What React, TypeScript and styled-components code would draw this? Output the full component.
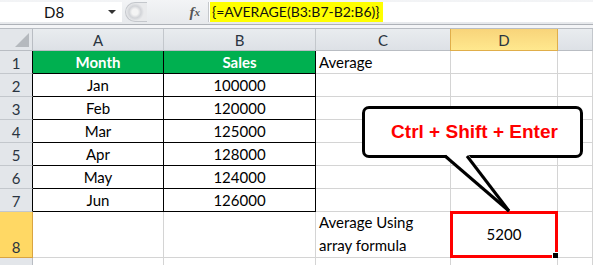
import styled, { createGlobalStyle } from "styled-components";

const Global = createGlobalStyle`
  html, body { margin: 0; padding: 0; background: #fff; }
  body { font-family: Lato, "Liberation Sans", sans-serif; overflow: hidden; }
`;

const Page = styled.div`
  position: relative;
  width: 593px;
  height: 265px;
  overflow: hidden;
  background: #fff;
`;

const FormulaBar = styled.div`
  display: flex;
  height: 25px;
  box-sizing: border-box;
  padding-top: 2px;
  border-bottom: 1px solid #aeb2b8;
  background: linear-gradient(#f3f4f6, #e7e9ec);
`;

const NameBox = styled.div`
  width: 122px;
  height: 20px;
  display: flex;
  align-items: center;
  background: #fff;
  font-size: 15px;
  color: #111;
  position: relative;
  padding-left: 44px;
  box-sizing: border-box;
`;

const Arrow = styled.span`
  position: absolute;
  right: 6px;
  top: 8px;
  border-left: 4px solid transparent;
  border-right: 4px solid transparent;
  border-top: 4px solid #333;
`;

const Grip = styled.div`
  width: 22px;
  height: 20px;
  margin-left: 3px;
  border-radius: 11px 0 0 11px;
  border: 1px solid #c4c7cc;
  border-right: none;
  box-sizing: border-box;
  background: radial-gradient(circle at 9px 9px, #f4f4f4 3px, #d2d4d8 6px, #e9eaec 9px);
`;

const FxBox = styled.div`
  width: 61px;
  display: flex;
  justify-content: flex-end;
  align-items: center;
  padding-right: 8px;
  box-sizing: border-box;
  font-family: "Liberation Serif", serif;
  font-style: italic;
  font-weight: 700;
  font-size: 15px;
  color: #555;
  height: 20px;
  & small { font-size: 11px; }
`;

const FormulaInput = styled.div`
  flex: 1;
  height: 20px;
  background: #fff;
  border-left: 1px solid #c4c7cc;
  display: flex;
  align-items: center;
  padding-left: 1px;
`;

const Highlight = styled.span`
  background: #ffff00;
  font-size: 14px;
  line-height: 20px;
  padding: 0 3px 0 2px;
  color: #111;
`;

const Spacer = styled.div`
  height: 3px;
  background: #f4f5f7;
`;

const Sheet = styled.div`
  display: grid;
  grid-template-columns: 33px 131px 152px 135px 107px 1fr;
  grid-template-rows: 22px repeat(7, 23px) 46px 20px;
  border-top: 1px solid #b9bdc3;
`;

const Corner = styled.div`
  background: #e3e6ea;
  border-right: 1px solid #b9bdc3;
  border-bottom: 1px solid #b9bdc3;
  position: relative;
  &::after {
    content: "";
    position: absolute;
    right: 3px;
    bottom: 3px;
    border-left: 14px solid transparent;
    border-bottom: 14px solid #b5b9be;
  }
`;

const ColHead = styled.div<{ $sel?: boolean }>`
  display: flex;
  align-items: center;
  justify-content: center;
  font-size: 15px;
  color: #2a3440;
  background: ${p => (p.$sel ? "linear-gradient(#f8d47a, #ffe88e)" : "linear-gradient(#e9ecef, #dde1e6)")};
  border-right: 1px solid ${p => (p.$sel ? "#e0ae4a" : "#c3c7cc")};
  border-left: ${p => (p.$sel ? "1px solid #e0ae4a" : "none")};
  border-bottom: 1px solid ${p => (p.$sel ? "#e0ae4a" : "#b9bdc3")};
  margin-left: ${p => (p.$sel ? "-1px" : "0")};
`;

const RowHead = styled.div<{ $sel?: boolean; $boxed?: boolean }>`
  display: flex;
  align-items: flex-end;
  justify-content: center;
  padding-bottom: 1px;
  box-sizing: border-box;
  font-size: 15px;
  color: #2a3440;
  background: ${p => (p.$sel ? "#ffd864" : "#e3e6ea")};
  border-right: 1px solid ${p => (p.$boxed ? "#000" : p.$sel ? "#d9a441" : "#b9bdc3")};
  border-bottom: 1px solid ${p => (p.$sel ? "#d9a441" : "#c3c7cc")};
`;

const Cell = styled.div<{
  $boxed?: boolean;
  $green?: boolean;
  $align?: "left" | "center";
  $red?: boolean;
  $wrap?: boolean;
}>`
  position: relative;
  display: flex;
  align-items: ${p => (p.$wrap || p.$red ? "center" : "flex-end")};
  justify-content: ${p => (p.$align === "left" ? "flex-start" : "center")};
  padding: 0 3px 1px;
  box-sizing: border-box;
  font-size: 15px;
  line-height: ${p => (p.$wrap ? "23px" : "20px")};
  color: ${p => (p.$green ? "#fff" : "#000")};
  font-weight: ${p => (p.$green ? 700 : 400)};
  background: ${p => (p.$green ? "#00b050" : "#fff")};
  border-right: 1px solid ${p => (p.$boxed ? "#000" : "#d4d4d4")};
  border-bottom: 1px solid ${p => (p.$boxed ? "#000" : "#d4d4d4")};
  ${p =>
    p.$red &&
    `
    border: 3px solid #ff0000;
    margin: -1px 0 0 -1px;
  `}
`;

const FillHandle = styled.span`
  position: absolute;
  right: -4px;
  bottom: -4px;
  width: 5px;
  height: 5px;
  background: #000;
  border: 1px solid #fff;
`;

const Bubble = styled.div`
  position: absolute;
  left: 362px;
  top: 106px;
  width: 221px;
  height: 52px;
  box-sizing: border-box;
  border: 3px solid #000;
  border-radius: 7px;
  background: #fff;
  display: flex;
  align-items: center;
  justify-content: center;
  font-family: "Liberation Sans", Arial, sans-serif;
  font-weight: 700;
  font-size: 19px;
  color: #ff0000;
  padding: 0 0 1px 4px;
`;

const Tail = styled.svg`
  position: absolute;
  left: 440px;
  top: 150px;
  overflow: visible;
`;

type Row = { n: number; a: string; b: string; c?: string };

const rows: Row[] = [
  { n: 1, a: "Month", b: "Sales", c: "Average" },
  { n: 2, a: "Jan", b: "100000" },
  { n: 3, a: "Feb", b: "120000" },
  { n: 4, a: "Mar", b: "125000" },
  { n: 5, a: "Apr", b: "128000" },
  { n: 6, a: "May", b: "124000" },
  { n: 7, a: "Jun", b: "126000" },
];

export default function App() {
  return (
    <Page>
      <Global />
      <FormulaBar>
        <NameBox>
          D8
          <Arrow />
        </NameBox>
        <Grip />
        <FxBox>
          f<small>x</small>
        </FxBox>
        <FormulaInput>
          <Highlight>{"{=AVERAGE(B3:B7-B2:B6)}"}</Highlight>
        </FormulaInput>
      </FormulaBar>
      <Spacer />
      <Sheet>
        <Corner />
        <ColHead>A</ColHead>
        <ColHead>B</ColHead>
        <ColHead>C</ColHead>
        <ColHead $sel>D</ColHead>
        <ColHead />

        {rows.map(r => [
          <RowHead key={"h" + r.n} $boxed>{r.n}</RowHead>,
          <Cell key={"a" + r.n} $boxed $green={r.n === 1}>{r.a}</Cell>,
          <Cell key={"b" + r.n} $boxed $green={r.n === 1}>{r.b}</Cell>,
          <Cell key={"c" + r.n} $align="left">{r.c}</Cell>,
          <Cell key={"d" + r.n} />,
          <Cell key={"e" + r.n} />,
        ])}

        <RowHead $sel>8</RowHead>
        <Cell />
        <Cell />
        <Cell $align="left" $wrap>
          Average Using
          <br />
          array formula
        </Cell>
        <Cell $red>
          5200
          <FillHandle />
        </Cell>
        <Cell />

        <RowHead />
        <Cell />
        <Cell />
        <Cell />
        <Cell />
        <Cell />
      </Sheet>

      <Bubble>Ctrl + Shift + Enter</Bubble>
      <Tail width="80" height="70" viewBox="0 0 80 70">
        <polygon points="5,4 28,4 69,61" fill="#fff" />
        <line x1="5" y1="6" x2="69" y2="61" stroke="#000" strokeWidth="3" />
        <line x1="27" y1="6" x2="69" y2="61" stroke="#000" strokeWidth="3" />
      </Tail>
    </Page>
  );
}
